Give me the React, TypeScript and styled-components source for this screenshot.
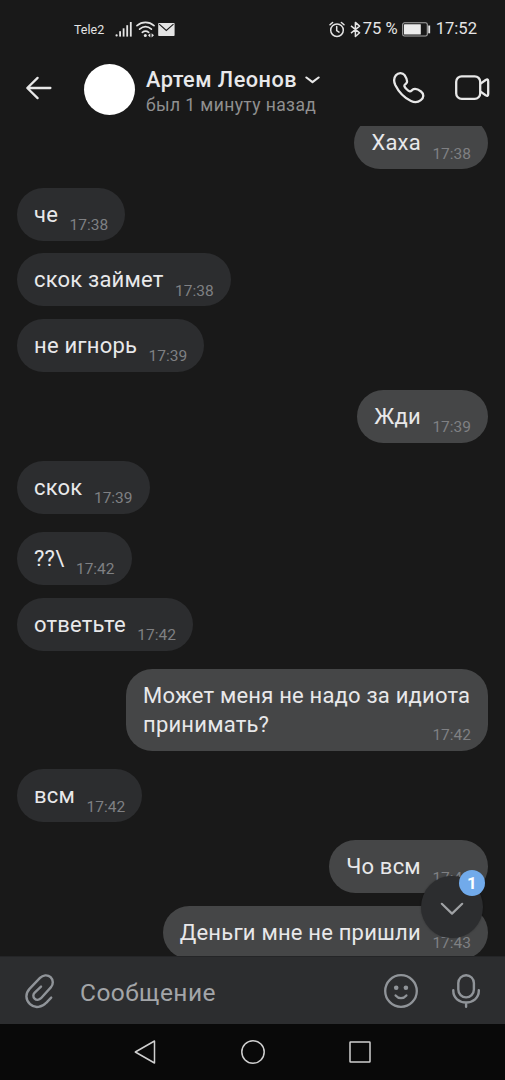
import React, { useState } from 'react';
import styled, { createGlobalStyle } from 'styled-components';

interface Message {
  id: number;
  text: string;
  time: string;
  own?: boolean;
}

const messages: Message[] = [
  { id: 1, text: 'Хаха', time: '17:38', own: true },
  { id: 2, text: 'че', time: '17:38' },
  { id: 3, text: 'скок займет', time: '17:38' },
  { id: 4, text: 'не игнорь', time: '17:39' },
  { id: 5, text: 'Жди', time: '17:39', own: true },
  { id: 6, text: 'скок', time: '17:39' },
  { id: 7, text: '??\\', time: '17:42' },
  { id: 8, text: 'ответьте', time: '17:42' },
  { id: 9, text: 'Может меня не надо за идиота принимать?', time: '17:42', own: true },
  { id: 10, text: 'всм', time: '17:42' },
  { id: 11, text: 'Чо всм', time: '17:43', own: true },
  { id: 12, text: 'Деньги мне не пришли', time: '17:43', own: true },
];

// Messages that open a new visual group get a wider gap above them
const gapAbove = (index: number) => {
  if (index === 0) return 0;
  const senderChanged = !!messages[index].own !== !!messages[index - 1].own;
  return senderChanged || messages[index].id === 7 ? 18.3 : 12.8;
};

const SignalIcon = () => (
  <svg width="18" height="17" viewBox="0 0 18 17" fill="#e4e4e4">
    <rect x="0.5" y="13.2" width="2.2" height="2.4" rx="1" />
    <rect x="4.2" y="10.2" width="1.8" height="5.4" />
    <rect x="7.7" y="7.3" width="1.8" height="8.3" />
    <rect x="11.3" y="4.2" width="1.8" height="11.4" />
    <rect x="14.9" y="1" width="1.8" height="14.6" />
  </svg>
);

const WifiIcon = () => (
  <svg width="19" height="17" viewBox="0 0 19 17" fill="none" stroke="#e4e4e4" strokeWidth="1.7" strokeLinecap="round">
    <path d="M1 4.6C6 .3 13 .3 18 4.6" />
    <path d="M3.6 8.1c3.6-3 8.2-3 11.8 0" />
    <path d="M6.3 11.3c2-1.6 4.4-1.6 6.4 0" />
    <circle cx="9.3" cy="14.5" r="1.5" fill="#e4e4e4" stroke="none" />
    <path d="M14.3 12.2v4.2L12 14.3zM15.6 12.2v4.2l2.4-2.1z" fill="#e4e4e4" stroke="none" />
  </svg>
);

const MailIcon = () => (
  <svg width="17" height="13" viewBox="0 0 17 13">
    <rect x="0.2" y="0" width="16.4" height="13" rx="0.8" fill="#e4e4e4" />
    <path d="M1.2 1.2l7.1 6.3 7.2-6.3" fill="none" stroke="#1a1a1a" strokeWidth="1.1" />
  </svg>
);

const AlarmIcon = () => (
  <svg width="16" height="17" viewBox="0 0 16 17" fill="none" stroke="#e4e4e4" strokeWidth="1.5" strokeLinecap="round">
    <circle cx="8" cy="9.2" r="6.3" />
    <path d="M7.7 5.6v3.9l2.3 1.6M1 3.8l2.6-2.3M15 3.8l-2.6-2.3" />
  </svg>
);

const BluetoothIcon = () => (
  <svg width="11" height="17" viewBox="0 0 11 17" fill="none" stroke="#e4e4e4" strokeWidth="1.5" strokeLinejoin="round">
    <path d="M1 4.8l8.6 7-4.2 3.7V1.4l4.2 3.7-8.6 7" />
  </svg>
);

const BatteryIcon = () => (
  <svg width="29" height="15" viewBox="0 0 29 15">
    <rect x="0.7" y="0.8" width="24.6" height="13.2" rx="1.8" fill="none" stroke="#a8a8a8" strokeWidth="1.1" />
    <rect x="2" y="2.2" width="16.8" height="10.4" rx="0.5" fill="#ececec" />
    <path d="M27.2 3.5v7.8" stroke="#e4e4e4" strokeWidth="1.9" />
  </svg>
);

const BackIcon = () => (
  <svg width="28" height="26" viewBox="0 0 28 26" fill="none" stroke="#e8e8e8" strokeWidth="2.3" strokeLinecap="round" strokeLinejoin="round">
    <path d="M12.6 2.9L2.3 13l10.3 10.1M2.8 13h22.6" />
  </svg>
);

const PhoneIcon = () => (
  <svg width="34" height="34" viewBox="0 0 34 34" fill="none" stroke="#e8e8e8" strokeWidth="2.3" strokeLinejoin="round">
    <path d="M3.9 4.3C6.3 1.4 10.6 1.3 12.6 4.2C14.3 6.8 15.6 9.2 14.9 11.3C14.3 13 12 13.5 12.4 15.1C12.9 16.8 16.2 20 17.8 20.3C19.4 20.6 19.9 18.6 21.7 18.1C24 17.5 26.8 18.8 29 20.5C32.2 23 31.9 26.9 28.8 29.2C26 31.4 22.4 31.6 19 30C13 27.2 6.6 20.7 3.4 14.3C1.7 10.7 1.7 7 3.9 4.3Z" />
  </svg>
);

const VideoIcon = () => (
  <svg width="36" height="28" viewBox="0 0 36 28" fill="none" stroke="#e8e8e8" strokeWidth="2.3" strokeLinejoin="round">
    <rect x="2.2" y="2.3" width="24" height="22.6" rx="5.5" />
    <path d="M26.2 9.9L31.7 6Q34.2 4.5 34.2 7.2v12.9q0 2.7-2.5 1.2l-5.5-3.9" />
  </svg>
);

const ClipIcon = () => (
  <svg width="32" height="36" viewBox="0 0 32 36" fill="none" stroke="#909499" strokeWidth="2.4" strokeLinecap="round" strokeLinejoin="round">
    <path d="M27.2 24.6L22.2 29.8C18.4 34 11 36 6 31.2C1.2 26.5 1.4 20.4 5.5 15.9L16 4.9C18.8 2 23.6 1.3 26.6 4.2C29.5 7 29.5 11.4 26.8 14.4L17 25.2C15.2 27 12.4 27.4 10.6 25.6C8.8 23.9 9 21.4 10.7 19.6L17 13.6" />
  </svg>
);

const SmileIcon = () => (
  <svg width="36" height="36" viewBox="0 0 36 36" fill="none" stroke="#909499" strokeWidth="2.3" strokeLinecap="round">
    <circle cx="18" cy="18" r="15.8" />
    <path d="M12.6 22.4c3 3.6 7.8 3.6 10.8 0" />
    <circle cx="13.2" cy="14.8" r="2.3" fill="#909499" stroke="none" />
    <circle cx="22.9" cy="14.8" r="2.3" fill="#909499" stroke="none" />
  </svg>
);

const MicIcon = () => (
  <svg width="30" height="36" viewBox="0 0 30 36" fill="none" stroke="#909499" strokeWidth="2.4" strokeLinecap="round">
    <rect x="7.3" y="2.2" width="15.6" height="22.2" rx="7.8" />
    <path d="M2.3 17.2v.9c0 6.8 5.8 11.4 12.8 11.4s12.7-4.6 12.7-11.4v-.9M15.1 29.8v4" />
  </svg>
);

const App: React.FC = () => {
  const [draft, setDraft] = useState('');

  return (
    <Screen>
      <GlobalStyle />
      <StatusBar>
        <StatusGroup>
          <Carrier>Tele2</Carrier>
          <SignalIcon />
          <WifiIcon />
          <MailIcon />
        </StatusGroup>
        <StatusGroup>
          <AlarmIcon />
          <BluetoothSlot>
            <BluetoothIcon />
          </BluetoothSlot>
          <StatusText>75 %</StatusText>
          <BatteryIcon />
          <Clock>17:52</Clock>
        </StatusGroup>
      </StatusBar>

      <Header>
        <IconButton aria-label="Назад">
          <BackIcon />
        </IconButton>
        <Avatar />
        <Peer>
          <PeerName>
            Артем Леонов
            <svg width="15" height="8" viewBox="0 0 15 8" fill="none" stroke="#e8e8e8" strokeWidth="2.1" strokeLinecap="round" strokeLinejoin="round">
              <path d="M1.4 1.5l6.1 4.6 6.1-4.6" />
            </svg>
          </PeerName>
          <LastSeen>был 1 минуту назад</LastSeen>
        </Peer>
        <HeaderActions>
          <IconButton aria-label="Позвонить">
            <PhoneIcon />
          </IconButton>
          <IconButton aria-label="Видеозвонок">
            <VideoIcon />
          </IconButton>
        </HeaderActions>
      </Header>

      <Chat>
        <MessageList>
          {messages.map((message, index) => (
            <Bubble key={message.id} $own={message.own} $gap={gapAbove(index)}>
              <MessageText>{message.text}</MessageText>
              <Time $overlap={message.text.length > 30}>{message.time}</Time>
            </Bubble>
          ))}
        </MessageList>
        <ScrollDown aria-label="Вниз">
          <svg width="24" height="14" viewBox="0 0 24 14" fill="none" stroke="#a0a2a5" strokeWidth="2.2" strokeLinecap="round" strokeLinejoin="round">
            <path d="M1.8 1.8L12 11.6 22.2 1.8" />
          </svg>
          <Badge>1</Badge>
        </ScrollDown>
      </Chat>

      <Composer>
        <IconButton aria-label="Прикрепить">
          <ClipIcon />
        </IconButton>
        <MessageInput value={draft} onChange={(e) => setDraft(e.target.value)} placeholder="Сообщение" />
        <ComposerActions>
          <IconButton aria-label="Эмодзи">
            <SmileIcon />
          </IconButton>
          <IconButton aria-label="Голосовое сообщение">
            <MicIcon />
          </IconButton>
        </ComposerActions>
      </Composer>

      <NavBar>
        <svg width="24" height="26" viewBox="0 0 24 26" fill="none" stroke="#cfcfcf" strokeWidth="1.5" strokeLinejoin="round">
          <path d="M21.5 2v22L2.3 13z" />
        </svg>
        <svg width="26" height="26" viewBox="0 0 26 26" fill="none" stroke="#cfcfcf" strokeWidth="1.5">
          <circle cx="13" cy="13" r="11.2" />
        </svg>
        <svg width="24" height="26" viewBox="0 0 24 26" fill="none" stroke="#cfcfcf" strokeWidth="1.5">
          <rect x="2" y="3" width="20" height="20" rx="0.6" />
        </svg>
      </NavBar>
    </Screen>
  );
};

// Styled components
const GlobalStyle = createGlobalStyle`
  * {
    box-sizing: border-box;
  }

  body {
    margin: 0;
    background: #191919;
  }

  svg {
    display: block;
    flex-shrink: 0;
  }
`;

const Screen = styled.div`
  display: flex;
  flex-direction: column;
  width: 505px;
  height: 1080px;
  overflow: hidden;
  background: #191919;
  color: #e8e8ea;
  font-family: Roboto, 'Noto Sans', sans-serif;
`;

const StatusBar = styled.div`
  display: flex;
  justify-content: space-between;
  align-items: center;
  height: 58px;
  padding: 0 28px 0 74px;
  flex-shrink: 0;
`;

const StatusGroup = styled.div`
  display: flex;
  align-items: center;
  gap: 3px;
  color: #e4e4e4;
`;

const Carrier = styled.span`
  width: 38px;
  font-size: 12.5px;
  white-space: nowrap;
`;

const StatusText = styled.span`
  font-size: 16.6px;
  line-height: 20px;
  white-space: nowrap;
  margin: 0 1px 0 0;
`;

const BluetoothSlot = styled.span`
  margin: 0 -1px 0 2px;
`;

const Clock = styled(StatusText)`
  margin: 0 0 0 2px;
`;

const Header = styled.header`
  display: flex;
  align-items: center;
  height: 68px;
  padding: 0 15px 9px 25px;
  flex-shrink: 0;
`;

const IconButton = styled.button`
  display: flex;
  padding: 0;
  border: none;
  background: none;
  cursor: pointer;
`;

const Avatar = styled.div`
  width: 51px;
  height: 51px;
  margin: 4px 11px 0 31px;
  border-radius: 50%;
  background: #fff;
`;

const Peer = styled.div`
  flex: 1;
  padding-top: 8px;
`;

const PeerName = styled.div`
  display: flex;
  align-items: center;
  gap: 8px;
  font-size: 21.7px;
  font-weight: 500;
  line-height: 26px;
  letter-spacing: 0.48px;
  white-space: nowrap;
`;

const LastSeen = styled.div`
  color: #909090;
  font-size: 17.5px;
  line-height: 24px;
  letter-spacing: 0.4px;
  white-space: nowrap;
`;

const HeaderActions = styled.div`
  display: flex;
  align-items: center;
  gap: 28px;
`;

const Chat = styled.main`
  position: relative;
  height: 830px;
  flex-shrink: 0;
  overflow: hidden;
`;

const MessageList = styled.div`
  display: flex;
  flex-direction: column;
  height: 100%;
  padding: 0 17px;
  margin-top: -9.4px;
`;

const Bubble = styled.div<{ $own?: boolean; $gap: number }>`
  display: flex;
  align-items: flex-end;
  align-self: ${props => props.$own ? 'flex-end' : 'flex-start'};
  flex-shrink: 0;
  max-width: 362px;
  margin-top: ${props => props.$gap}px;
  padding: 11.8px 17px 11.6px;
  border-radius: 26.4px;
  background: ${props => props.$own ? '#454647' : '#2c2d2f'};
`;

const MessageText = styled.div`
  font-size: 22px;
  line-height: 29.4px;
  letter-spacing: 0.2px;
`;

const Time = styled.span<{ $overlap: boolean }>`
  flex-shrink: 0;
  margin: 0 0 -5px ${props => props.$overlap ? '-38px' : '11.5px'};
  color: #7f8083;
  font-size: 15.5px;
  line-height: 18px;
`;

const ScrollDown = styled.button`
  position: absolute;
  right: 22px;
  bottom: 18px;
  display: flex;
  align-items: center;
  justify-content: center;
  width: 62px;
  height: 62px;
  padding: 3px 0 0;
  border: none;
  border-radius: 50%;
  background: #2c2d2f;
  box-shadow: 0 0 2px rgba(0, 0, 0, 0.35);
`;

const Badge = styled.span`
  position: absolute;
  top: -6px;
  right: -2px;
  width: 26px;
  height: 26px;
  border-radius: 50%;
  background: #71aaeb;
  color: #fff;
  font: 700 17px/26px Roboto, sans-serif;
  text-align: center;
`;

const Composer = styled.div`
  display: flex;
  align-items: center;
  height: 68px;
  padding: 0 24px;
  border-top: 1px solid #242527;
  background: #2c2d2f;
  flex-shrink: 0;
`;

const MessageInput = styled.input`
  flex: 1;
  min-width: 0;
  padding: 3px 0 0 24px;
  border: none;
  outline: none;
  background: none;
  color: #e8e8ea;
  font: 24.5px Roboto, 'Noto Sans', sans-serif;
  letter-spacing: 0.45px;

  &::placeholder {
    color: #a3a5a8;
    opacity: 1;
  }
`;

const ComposerActions = styled.div`
  display: flex;
  align-items: center;
  gap: 32px;
`;

const NavBar = styled.nav`
  display: flex;
  align-items: center;
  justify-content: center;
  gap: 82.5px;
  height: 56px;
  background: #090909;
  flex-shrink: 0;
`;

export default App;
